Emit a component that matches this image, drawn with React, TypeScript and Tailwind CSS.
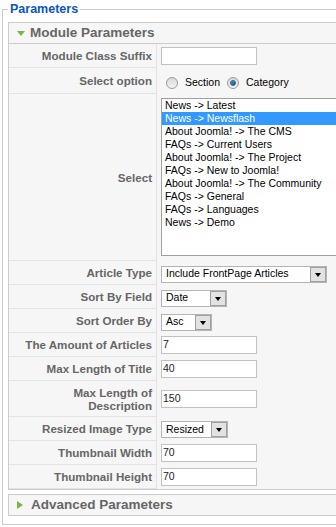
import React from "react";

const listItems = [
  "News -> Latest",
  "News -> Newsflash",
  "About Joomla! -> The CMS",
  "FAQs -> Current Users",
  "About Joomla! -> The Project",
  "FAQs -> New to Joomla!",
  "About Joomla! -> The Community",
  "FAQs -> General",
  "FAQs -> Languages",
  "News -> Demo",
];

function Label({ children }: { children: React.ReactNode }) {
  return (
    <div className="w-[148px] shrink-0 h-full flex items-center justify-end text-right pr-[4px] border-r border-b border-[#e3e3e3] text-[11.6px] leading-[13px] font-bold text-[#666]">
      {children}
    </div>
  );
}

function Row({ h, label, children }: { h: string; label: React.ReactNode; children: React.ReactNode }) {
  return (
    <div className={`flex ${h}`}>
      <Label>{label}</Label>
      <div className="flex-1 flex items-center pl-[4px]">{children}</div>
    </div>
  );
}

function TextInput({ value }: { value?: string }) {
  return (
    <div className="w-[96px] h-[18px] bg-white border border-[#c2c2c2] flex items-center pl-[1px] text-[10.5px] text-[#222]">
      {value}
    </div>
  );
}

function SelectBox({ value, w }: { value: string; w: string }) {
  return (
    <div className={`${w} h-[17px] bg-white border border-[#b4b4b4] flex items-center`}>
      <span className="flex-1 pl-[4px] text-[10.5px] text-black whitespace-nowrap">{value}</span>
      <div className="w-[16px] h-[15px] border border-[#a0a0a0] bg-[#e2e2e2] flex items-center justify-center">
        <div className="w-0 h-0 border-l-[3.5px] border-r-[3.5px] border-t-[4px] border-l-transparent border-r-transparent border-t-black mt-[1px]" />
      </div>
    </div>
  );
}

function Radio({ checked }: { checked?: boolean }) {
  return (
    <div className="w-[12px] h-[12px] rounded-full border border-[#9a9a9a] bg-gradient-to-b from-[#d8d8d8] to-[#f4f4f4] flex items-center justify-center">
      {checked && <div className="w-[6px] h-[6px] rounded-full bg-gradient-to-br from-[#4aa0d8] to-[#0e4f86] border border-[#2a5f8a]" />}
    </div>
  );
}

function PanelTitle({ open, title }: { open?: boolean; title: string }) {
  return (
    <div className="h-[20px] flex items-center bg-[#f6f6f6]">
      {open ? (
        <div className="ml-[8px] w-0 h-0 border-l-[4.5px] border-r-[4.5px] border-t-[5px] border-l-transparent border-r-transparent border-t-[#76b843]" />
      ) : (
        <div className="ml-[8px] w-0 h-0 border-t-[4.5px] border-b-[4.5px] border-l-[6px] border-t-transparent border-b-transparent border-l-[#76b843]" />
      )}
      <span className={`${open ? "ml-[5px]" : "ml-[8px]"} text-[13.5px] font-bold text-[#666] whitespace-nowrap`}>{title}</span>
    </div>
  );
}

export default function App() {
  return (
    <div className="w-[336px] h-[527px] overflow-hidden bg-white font-['Liberation_Sans',Arial,sans-serif]">
      <div className="w-[400px] pl-[2px] pt-[2px]">
        <fieldset className="border border-[#cccccc] px-[5px] pb-[8px]">
          <legend className="px-[2px] text-[12.5px] leading-[15px] font-bold text-[#0b55c4]">
            Parameters
          </legend>

          <div className="mt-[5px] border border-[#cccccc] bg-[#f6f6f6]">
            <div className="border-b border-[#cccccc]">
              <PanelTitle open title="Module Parameters" />
            </div>

            <Row h="h-[24px]" label="Module Class Suffix">
              <TextInput />
            </Row>

            <Row h="h-[26px]" label="Select option">
              <div className="flex items-center pt-[3px] text-[10.5px] text-black">
                <div className="ml-[5px]"><Radio /></div>
                <span className="ml-[7px]">Section</span>
                <div className="ml-[7px]"><Radio checked /></div>
                <span className="ml-[7px]">Category</span>
              </div>
            </Row>

            <Row h="h-[167px]" label="Select">
              <div className="w-[200px] h-[158px] mb-[1px] bg-white border border-[#a0a0a0] text-[10.5px] text-black">
                {listItems.map((item, i) => (
                  <div
                    key={item}
                    className={`h-[13px] leading-[13px] pl-[3px] whitespace-nowrap ${i === 1 ? "bg-[#3399ff] text-white" : ""}`}
                  >
                    {item}
                  </div>
                ))}
              </div>
            </Row>

            <Row h="h-[24px]" label="Article Type">
              <div className="pt-[2px]"><SelectBox value="Include FrontPage Articles" w="w-[166px]" /></div>
            </Row>
            <Row h="h-[24px]" label="Sort By Field">
              <div className="pt-[2px]"><SelectBox value="Date" w="w-[66px]" /></div>
            </Row>
            <Row h="h-[24px]" label="Sort Order By">
              <div className="pt-[2px]"><SelectBox value="Asc" w="w-[51px]" /></div>
            </Row>
            <Row h="h-[24px]" label="The Amount of Articles">
              <TextInput value="7" />
            </Row>
            <Row h="h-[24px]" label="Max Length of Title">
              <TextInput value="40" />
            </Row>
            <Row
              h="h-[36px]"
              label={
                <span>
                  Max Length of
                  <br />
                  Description
                </span>
              }
            >
              <TextInput value="150" />
            </Row>
            <Row h="h-[24px]" label="Resized Image Type">
              <div className="pt-[1px]"><SelectBox value="Resized" w="w-[67px]" /></div>
            </Row>
            <Row h="h-[24px]" label="Thumbnail Width">
              <TextInput value="70" />
            </Row>
            <Row h="h-[24px]" label="Thumbnail Height">
              <TextInput value="70" />
            </Row>
          </div>

          <div className="mt-[4px] border border-[#cccccc] bg-[#f6f6f6]">
            <PanelTitle title="Advanced Parameters" />
          </div>
        </fieldset>
      </div>
    </div>
  );
}
